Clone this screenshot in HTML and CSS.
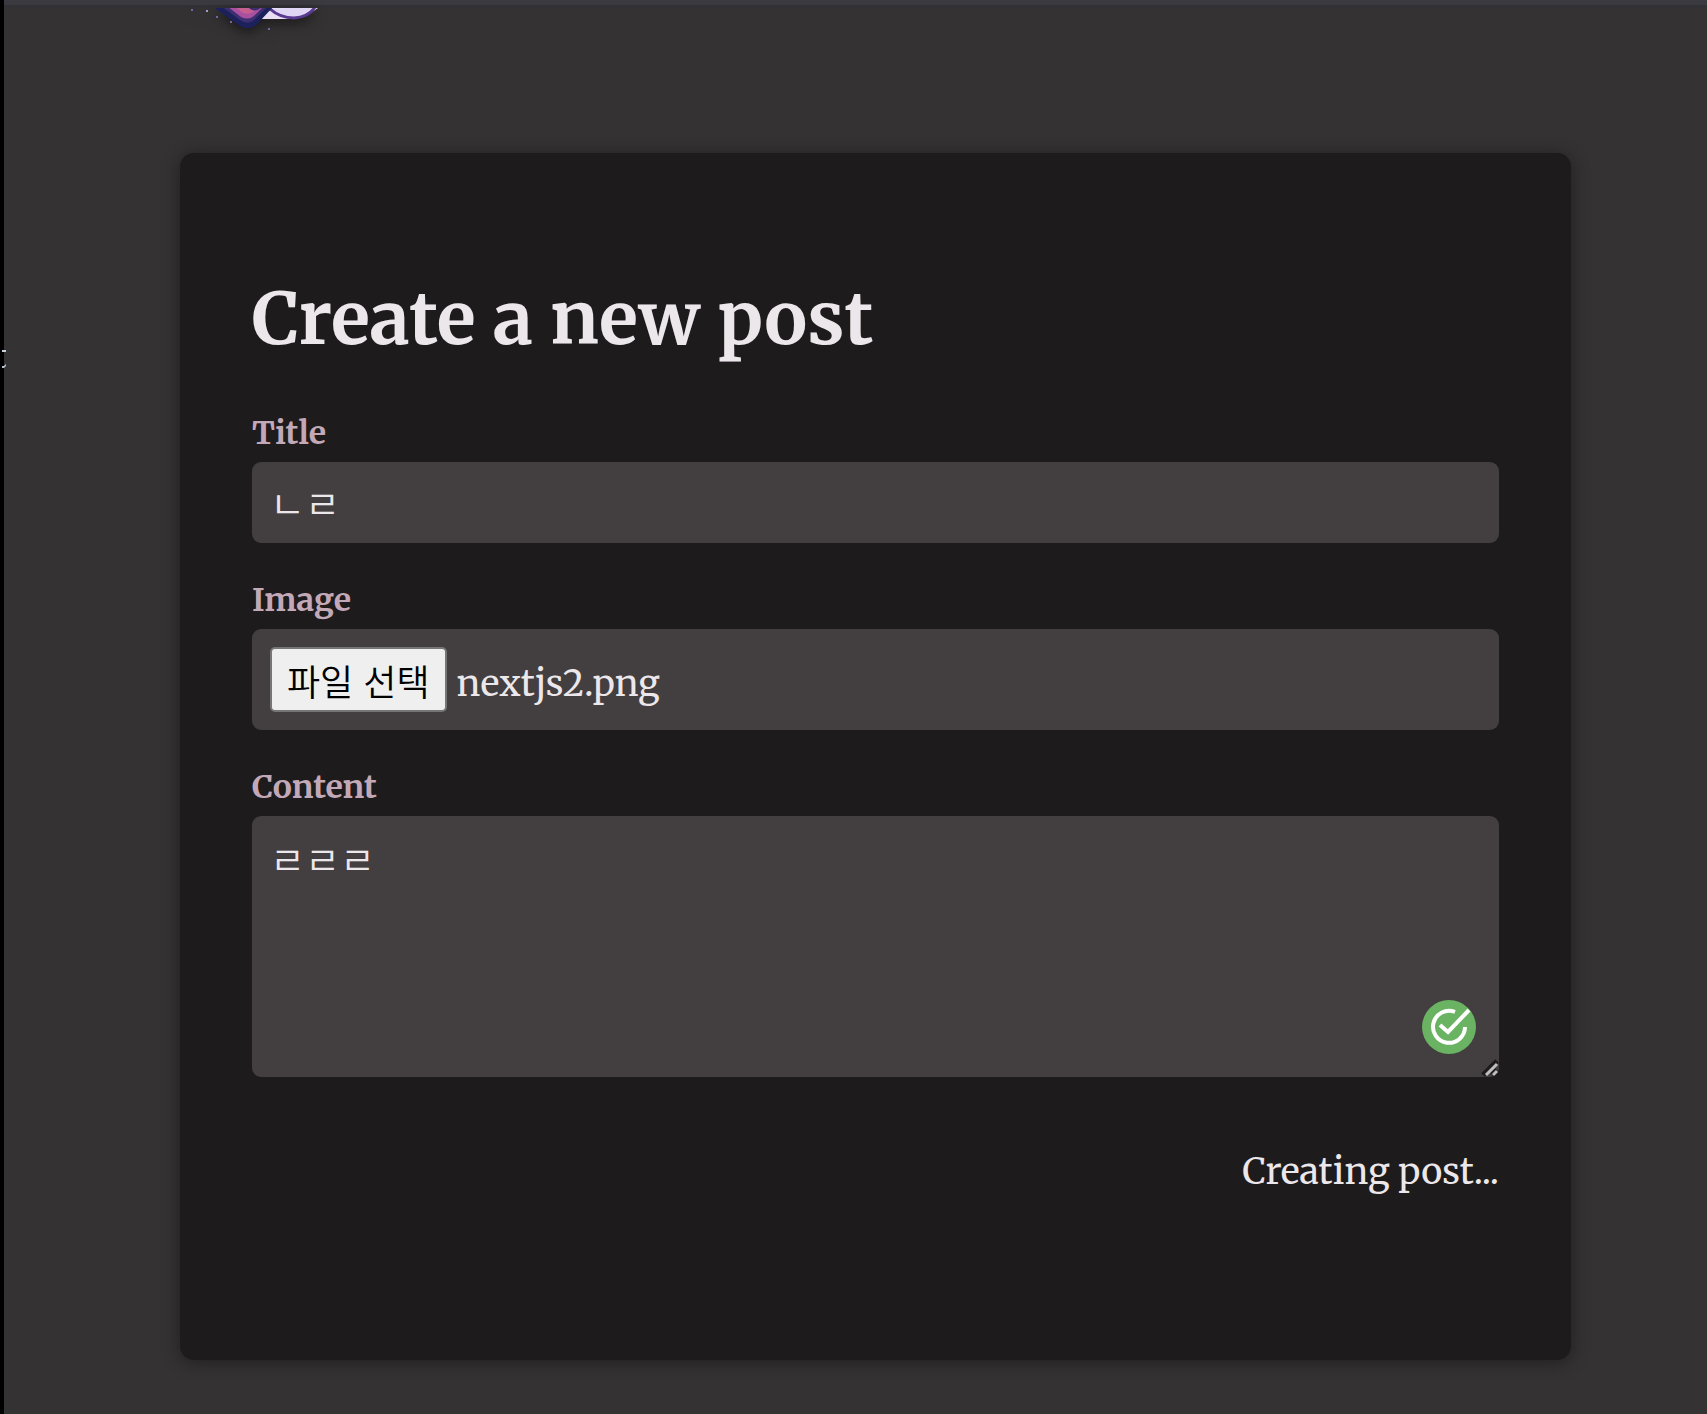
FILE: index.html
```
<!DOCTYPE html>
<html lang="ko">

<head>
    <meta charset="UTF-8">
    <meta name="viewport" content="width=device-width, initial-scale=1">
    <title>Create a new post</title>
    <link rel="stylesheet" href="styles.css">
</head>

<body>
    <div class="side-strip">
        <svg class="side-mark" width="4" height="20" viewBox="0 0 4 20" aria-hidden="true">
            <path d="M0 1H4V3H0Z" fill="#c8d4dc" />
            <path d="M0 17H2L4 15V17L2 19H0Z" fill="#b4c2c8" />
        </svg>
    </div>

    <div class="page">
        <header class="header">
            <svg class="logo" width="150" height="36" viewBox="0 0 150 36" aria-hidden="true">
                <path d="M74 0H128Q114 11 100 11H72Z" fill="#e8dff5" />
                <path d="M80 1Q90 10 104 10Q119 9 125 -1" fill="#dfd5f4" stroke="#5a3a91" stroke-width="3" />
                <path d="M23 -1L46 15Q59 26 69 14L84 -2Z" fill="#1c215c" />
                <path d="M31 -2L50 12Q58 18 65 11L78 -2Z" fill="#3e2f70" />
                <path d="M37 -2L51 9Q59 13 65 7L74 -2Z" fill="#a951a0" />
                <path d="M44 -2L53 5Q58 7 63 4L68 -2Z" fill="#c85f91" />
                <path d="M58 -1Q64 6 72 -1Z" fill="#3c2f70" />
                <g fill="#7b62a8">
                    <path d="M1 1h2v2h-2zM26 8h2v2h-2zM40 13h2v2h-2zM78 20h2v2h-2z" />
                    <path d="M16 2h2v2h-2z" fill="#a99bc8" />
                </g>
            </svg>
        </header>

        <main class="card">
            <h1>Create a new post</h1>
            <form>
                <div class="form-control">
                    <label for="title">Title</label>
                    <input class="field" type="text" id="title" name="title" value="ㄴㄹ">
                </div>
                <div class="form-control">
                    <label for="image">Image</label>
                    <div class="field file-field">
                        <input type="file" id="image" name="image" accept="image/png, image/jpeg" hidden>
                        <button type="button" id="pick">파일 선택</button>
                        <output id="file-name" for="image">nextjs2.png</output>
                    </div>
                </div>
                <div class="form-control">
                    <label for="content">Content</label>
                    <div class="content-box">
                        <textarea class="field" id="content" name="content" spellcheck="false">ㄹㄹㄹ</textarea>
                        <svg class="check" width="54" height="54" viewBox="0 0 54 54" aria-hidden="true">
                            <circle cx="27" cy="27" r="27" fill="#69b362" />
                            <g fill="none" stroke="#fff" stroke-width="4">
                                <path d="M33 12A16 16 0 1 0 43 27" />
                                <path d="M18 25L26 32L47 10" />
                            </g>
                        </svg>
                        <svg class="grip" width="18" height="18" viewBox="0 0 18 18" aria-hidden="true">
                            <path d="M2 16L16 2M11 16L16 11" stroke="#1e1b1c" stroke-width="5" />
                            <path d="M5 16L16 5M12 16L16 12" stroke="#c0bebf" stroke-width="3" />
                        </svg>
                    </div>
                </div>
                <p class="form-actions">Creating post...</p>
            </form>
        </main>
    </div>

    <script>
        const image = document.getElementById('image');
        const fileName = document.getElementById('file-name');

        document.getElementById('pick').addEventListener('click', () => image.click());

        image.addEventListener('change', () => {
            if (image.files.length) fileName.textContent = image.files[0].name;
        });
    </script>
</body>

</html>
```
FILE: styles.css
```
* {
    box-sizing: border-box;
}

body {
    margin: 0;
    display: flex;
    min-height: 100vh;
    background: #343233;
    color: #ece7ea;
    font-family: Merriweather, "DejaVu Serif Condensed", "Noto Sans CJK KR", serif;
    font-size: 36px;
}

.side-strip {
    position: relative;
    width: 4px;
    background: #000;
}

.side-mark {
    position: absolute;
    top: 349px;
    left: 2px;
}

.page {
    flex: 1;
    min-width: 0;
    border-top: 5px solid #3c3a41;
}

.header {
    height: 148px;
    padding-left: 186px;
    border-top: 3px solid #323135;
}

.logo {
    display: block;
    filter: drop-shadow(0 4px 6px rgba(0, 0, 0, 0.5));
}

.card {
    margin: 0 136px 54px 176px;
    padding: 108px 72px 166px;
    border-radius: 14px;
    background: #1e1b1c;
    box-shadow: 0 2px 18px rgba(0, 0, 0, 0.4);
}

h1 {
    margin: 0 0 37px;
    font-size: 72px;
    line-height: 115px;
}

.form-control {
    margin-bottom: 37px;
}

label {
    display: block;
    margin-bottom: 8px;
    color: #c3a9b7;
    font-size: 32px;
    font-weight: bold;
    line-height: 41px;
}

.field {
    display: block;
    width: 100%;
    padding: 18px;
    border: none;
    border-radius: 9px;
    background: #433e3f;
    color: inherit;
    font: inherit;
    line-height: 45px;
}

input.field,
textarea.field {
    font-size: 38px;
    font-weight: 350;
}

input.field {
    padding: 20px 18px 16px;
}

.file-field {
    display: flex;
    align-items: baseline;
    gap: 10px;
}

.file-field button {
    padding: 2px 15px 0;
    border: 2px solid #767676;
    border-radius: 5px;
    background: #efefef;
    color: #000;
    font-family: "Noto Sans CJK KR", sans-serif;
    font-size: 36px;
    font-weight: 350;
    line-height: 59px;
}

.content-box {
    position: relative;
}

textarea.field {
    height: 261px;
    line-height: 54px;
    resize: none;
}

.check {
    position: absolute;
    right: 23px;
    bottom: 23px;
}

.grip {
    position: absolute;
    right: 0;
    bottom: 0;
}

.form-actions {
    margin: 72px 0 0;
    line-height: 45px;
    text-align: right;
}
```
